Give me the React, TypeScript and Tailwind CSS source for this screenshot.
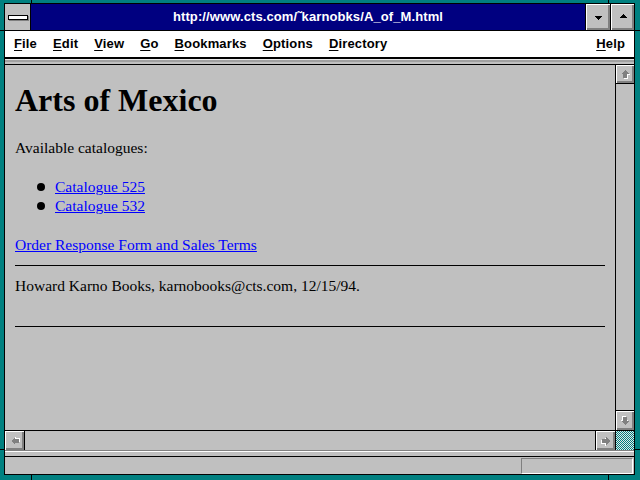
// Netscape (Win 3.1) window — "Arts of Mexico" page
const bevel = 'bg-[#c0c0c0] shadow-[inset_1px_1px_0_#ffffff,inset_-2px_-2px_0_#808080]';

// Disabled scroll arrow: gray glyph with a white drop shadow
function Arrow({ dir }: { dir: 'up' | 'down' | 'left' | 'right' }) {
  const rot =
    dir === 'up' ? '' : dir === 'down' ? 'rotate-180' : dir === 'left' ? '-rotate-90' : 'rotate-90';
  return (
    <svg width="10" height="10" viewBox="0 0 10 10" className={rot} shapeRendering="crispEdges">
      <polygon points="5,1 9,5 7,5 7,9 3,9 3,5 1,5" fill="#ffffff" transform="translate(1 1)" />
      <polygon points="5,1 9,5 7,5 7,9 3,9 3,5 1,5" fill="#808080" />
    </svg>
  );
}

function ScrollButton({ dir, className }: { dir: 'up' | 'down' | 'left' | 'right'; className: string }) {
  return (
    <div className={`${bevel} flex items-center justify-center ${className}`}>
      <Arrow dir={dir} />
    </div>
  );
}

const menu = ['File', 'Edit', 'View', 'Go', 'Bookmarks', 'Options', 'Directory'];

export default function App() {
  return (
    <div className="relative w-[640px] h-[480px] bg-[#008080] pt-[3px] pl-[4px] pr-[5px] pb-[5px] font-['Liberation_Sans',Arial,sans-serif]">
      {/* ── Frame corner notches ───────────────────────── */}
      <div className="absolute left-[31px] top-0 w-px h-[3px] bg-black" />
      <div className="absolute left-[608px] top-0 w-px h-[3px] bg-black" />
      <div className="absolute left-[31px] bottom-0 w-px h-[5px] bg-black" />
      <div className="absolute left-[608px] bottom-0 w-px h-[5px] bg-black" />
      <div className="absolute left-0 top-[30px] w-[4px] h-px bg-black" />
      <div className="absolute right-0 top-[30px] w-[5px] h-px bg-black" />
      <div className="absolute left-0 top-[449px] w-[4px] h-px bg-black" />
      <div className="absolute right-0 top-[449px] w-[5px] h-px bg-black" />

      <div className="h-full flex flex-col border border-black bg-[#c0c0c0]">
        {/* ── Title bar ──────────────────────────────────── */}
        <div className="flex h-[27px] border-b border-black">
          <div className="w-[26px] flex items-center justify-center border-r border-black bg-[#c0c0c0]">
            <div className="w-[20px] h-[5px] bg-white border border-black shadow-[1px_1px_0_#808080]" />
          </div>
          <div className="flex-1 bg-[#000080] flex items-center justify-center text-white font-bold text-[13px] tracking-[0.1px]">
            http://www.cts.com/˜karnobks/A_of_M.html
          </div>
          <div className={`w-[25px] border-l border-black ${bevel} flex items-center justify-center`}>
            <svg width="8" height="5" viewBox="0 0 8 5" shapeRendering="crispEdges" className="mt-[2px]">
              <polygon points="0,0 8,0 4,4" fill="#000" />
            </svg>
          </div>
          <div className={`w-[24px] border-l border-black ${bevel} flex items-center justify-center`}>
            <svg width="8" height="5" viewBox="0 0 8 5" shapeRendering="crispEdges" className="-mt-[1px]">
              <polygon points="4,0 8,4 0,4" fill="#000" />
            </svg>
          </div>
        </div>

        {/* ── Menu bar ───────────────────────────────────── */}
        <div className="flex items-center h-[28px] bg-white border-b-2 border-black pl-px pr-px text-[13px] font-bold tracking-[0.15px] text-black">
          {menu.map((m) => (
            <span key={m} className="px-2">
              <u className="underline-offset-2">{m[0]}</u>
              {m.slice(1)}
            </span>
          ))}
          <span className="ml-auto px-2">
            <u className="underline-offset-2">H</u>elp
          </span>
        </div>
        <div className="h-[6px] bg-[#c0c0c0] border-t border-[#e8e8e8] border-b border-b-black shadow-[inset_0_2px_0_#a0a0a0]" />

        {/* ── Page body + vertical scrollbar ─────────────── */}
        <div className="flex flex-1 min-h-0">
          <div className="flex-1 overflow-hidden pl-[10px] pr-[10px] pt-[19px] font-['Liberation_Serif','Times_New_Roman',serif] text-[15.5px] leading-[19px] text-black">
            <h1 className="text-[32px] leading-[32px] font-bold">Arts of Mexico</h1>
            <p className="mt-[22px]">Available catalogues:</p>
            <ul className="mt-[20px]">
              {['Catalogue 525', 'Catalogue 532'].map((c) => (
                <li key={c} className="flex items-center pl-[22px]">
                  <span className="w-2 h-2 rounded-full bg-black mr-[10px]" />
                  <a className="text-[#0000ff] underline">{c}</a>
                </li>
              ))}
            </ul>
            <p className="mt-[20px]">
              <a className="text-[#0000ff] underline">Order Response Form and Sales Terms</a>
            </p>
            <div className="mt-[11px] h-px bg-black" />
            <p className="mt-[10px]">Howard Karno Books, karnobooks@cts.com, 12/15/94.</p>
            <div className="mt-[31px] h-px bg-black" />
          </div>
          <div className="w-[19px] border-l border-black flex flex-col">
            <ScrollButton dir="up" className="h-[19px] border-b border-black" />
            <div className="flex-1" />
            <ScrollButton dir="down" className="h-[20px] border-t border-black" />
          </div>
        </div>

        {/* ── Horizontal scrollbar ───────────────────────── */}
        <div className="flex h-[20px] border-t border-black">
          <ScrollButton dir="left" className="w-[20px] border-r border-black" />
          <div className="flex-1" />
          <ScrollButton dir="right" className="w-[20px] border-l border-black" />
          <div className="w-[19px] border-l border-black bg-[repeating-conic-gradient(#008080_0%_25%,#e8e8e8_0%_50%)] bg-[length:2px_2px]" />
        </div>

        {/* ── Status bar ─────────────────────────────────── */}
        <div className="h-[7px] bg-[#c0c0c0] border-t border-[#808080] border-b border-b-black shadow-[inset_0_1px_0_#ffffff]" />
        <div className="flex-none h-[17px] flex justify-end items-start pt-px pr-px">
          <div className="w-[112px] h-[16px] border-t border-l border-[#808080] border-b border-r border-b-white border-r-white" />
        </div>
      </div>
    </div>
  );
}
